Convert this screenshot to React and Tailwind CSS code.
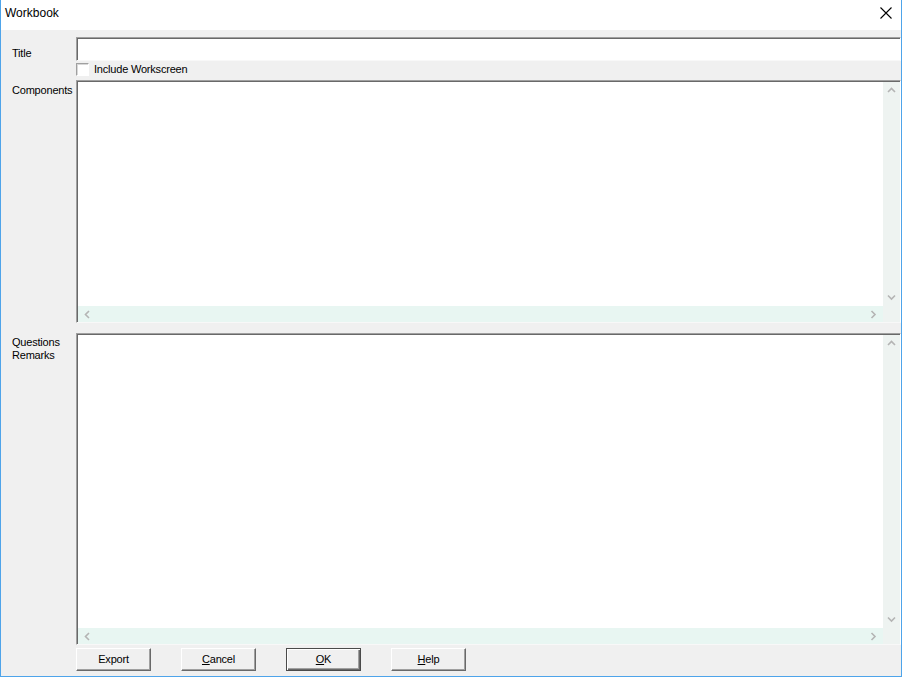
import React from "react";

function Chevron({ dir }) {
  const pts = {
    up: "1,5 4.5,1.5 8,5",
    down: "1,1.5 4.5,5 8,1.5",
    left: "5,1 1.5,4.5 5,8",
    right: "1.5,1 5,4.5 1.5,8",
  }[dir];
  const vertical = dir === "up" || dir === "down";
  return (
    <svg
      width={vertical ? 9 : 7}
      height={vertical ? 7 : 9}
      viewBox={vertical ? "0 0 9 7" : "0 0 7 9"}
      className="block"
    >
      <polyline points={pts} fill="none" stroke="#b4b4b4" strokeWidth="1.6" />
    </svg>
  );
}

function ScrollBox({ className }) {
  return (
    <div
      className={
        "flex flex-col border-t border-l border-r border-b border-t-[#a0a0a0] border-l-[#a0a0a0] border-r-white border-b-[#f8f8f8] shadow-[inset_1px_1px_0_#696969] " +
        className
      }
    >
      <div className="flex flex-1 min-h-0 pt-[1px] pl-[1px]">
        <div className="flex-1 bg-white" />
        <div className="w-[17px] bg-[#eef3f1] flex flex-col items-center justify-between py-[5px]">
          <Chevron dir="up" />
          <Chevron dir="down" />
        </div>
      </div>
      <div className="flex h-[16px] pl-[1px]">
        <div className="flex-1 bg-[#e8f6f2] flex items-center justify-between px-[6px]">
          <Chevron dir="left" />
          <Chevron dir="right" />
        </div>
        <div className="w-[17px] bg-[#eef3f1]" />
      </div>
    </div>
  );
}

function Btn({ children, isDefault }) {
  return (
    <div
      className={
        "w-[75px] h-[23px] flex items-center justify-center text-[11px] text-black bg-[#f0f0f0] " +
        (isDefault
          ? "border border-[#4a4a4a] shadow-[inset_1px_1px_0_#ffffff,inset_-1px_-1px_0_#696969,inset_-2px_-2px_0_#a0a0a0]"
          : "border-t border-l border-r border-b border-t-white border-l-white border-r-[#696969] border-b-[#696969] shadow-[inset_-1px_-1px_0_#a0a0a0]")
      }
    >
      {children}
    </div>
  );
}

export default function App() {
  return (
    <div className="w-[902px] h-[677px] flex flex-col bg-[#f0f0f0] border-l border-r border-b border-[#4ea4ea] font-['Liberation_Sans',Arial,sans-serif] text-black overflow-hidden">
      {/* title bar */}
      <div className="h-[30px] bg-white flex items-start justify-between shrink-0">
        <div className="text-[12px] leading-[14px] pl-[4px] pt-[6px]">Workbook</div>
        <div className="pt-[7px] pr-[9px]">
          <svg width="12" height="12" viewBox="0 0 12 12" className="block">
            <path d="M0.5 0.5 L11.5 11.5 M11.5 0.5 L0.5 11.5" stroke="#000" strokeWidth="1.1" />
          </svg>
        </div>
      </div>

      {/* body */}
      <div className="flex-1 flex flex-col pl-[11px] pt-[7px] text-[11px] leading-[13px] tracking-[-0.2px]">
        {/* Title row */}
        <div className="flex h-[24px]">
          <div className="w-[64px] pt-[10px]">Title</div>
          <div className="flex-1 bg-white border-t border-l border-r border-b border-t-[#a0a0a0] border-l-[#a0a0a0] border-r-white border-b-[#f8f8f8] shadow-[inset_1px_1px_0_#696969]" />
        </div>
        {/* checkbox row */}
        <div className="flex h-[13px] mt-[2px]">
          <div className="w-[64px]" />
          <div className="flex items-center">
            <div className="w-[13px] h-[13px] bg-white border-t border-l border-r border-b border-t-[#a0a0a0] border-l-[#a0a0a0] border-r-white border-b-white shadow-[inset_1px_1px_0_#d8d8d8]" />
            <span className="ml-[5px]">Include Workscreen</span>
          </div>
        </div>
        {/* Components */}
        <div className="flex h-[243px] mt-[4px]">
          <div className="w-[64px] pt-[4px]">Components</div>
          <ScrollBox className="flex-1" />
        </div>
        {/* Questions */}
        <div className="flex h-[312px] mt-[10px]">
          <div className="w-[64px] pt-[3px]">
            <div>Questions</div>
            <div>Remarks</div>
          </div>
          <ScrollBox className="flex-1" />
        </div>
        {/* Buttons */}
        <div className="flex h-[23px] mt-[3px]">
          <div className="w-[64px]" />
          <div className="flex gap-[30px]">
            <Btn>Export</Btn>
            <Btn>
              <span className="underline">C</span>ancel
            </Btn>
            <Btn isDefault>
              <span className="underline">O</span>K
            </Btn>
            <Btn>
              <span className="underline">H</span>elp
            </Btn>
          </div>
        </div>
      </div>
    </div>
  );
}
